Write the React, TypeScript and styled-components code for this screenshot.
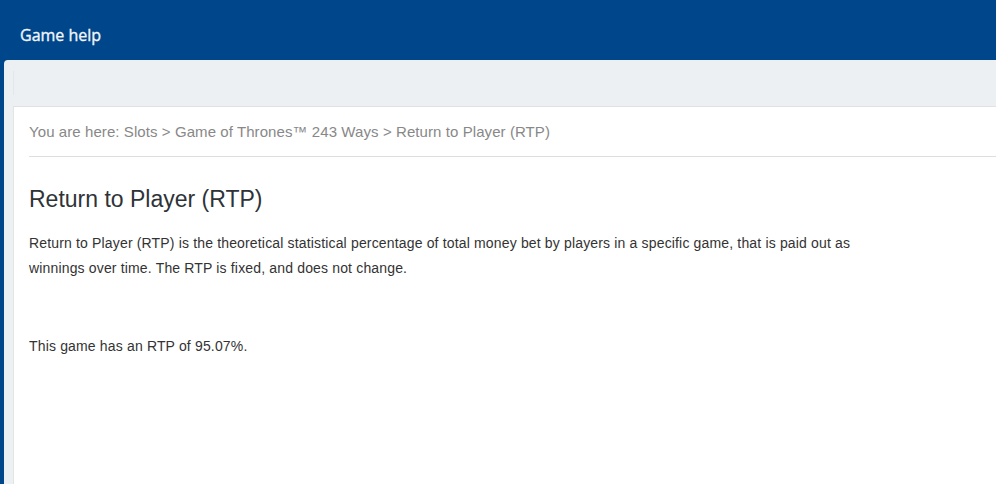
import * as React from 'react'
import styled, { createGlobalStyle } from 'styled-components'

const GlobalStyle = createGlobalStyle`
	html, body {
		margin: 0;
		padding: 0;
		background: #00468b;
		height: 100%;
	}
	#root {
		min-height: 100%;
	}
`

const Page = styled.div`
	display: flex;
	flex-direction: column;
	min-height: 484px;
	background: #00468b;
`

const Header = styled.header`
	height: 60px;
	display: flex;
	align-items: center;
	padding: 10px 0 0 20px;
	box-sizing: border-box;
	color: #f2f6fb;
	font-family: 'Open Sans', 'DejaVu Sans', sans-serif;
	font-size: 16px;
	font-weight: 400;
	-webkit-text-stroke: 0.35px #f2f6fb;
`

const Panel = styled.div`
	flex: 1;
	display: flex;
	flex-direction: column;
	margin-left: 4px;
	padding-left: 9px;
	background: #edf0f3;
	border-radius: 4px 0 0 0;
`

const Toolbar = styled.div`
	height: 46px;
	display: flex;
	align-items: center;
`

const ToolbarDivider = styled.span`
	width: 1px;
	height: 24px;
	background: #e3e6ea;
`

const Content = styled.main`
	flex: 1;
	background: #ffffff;
	border-left: 1px solid #e2e4e7;
	border-top: 1px solid #dfe1e4;
	padding-left: 15px;
	font-family: 'Liberation Sans', Arial, sans-serif;
`

const Breadcrumb = styled.nav`
	height: 49px;
	display: flex;
	align-items: center;
	border-bottom: 1px solid #dedede;
	color: #888888;
	font-size: 15px;
	letter-spacing: 0.08px;
`

const Title = styled.h1`
	margin: 29px 0 19px;
	font-size: 23px;
	font-weight: 400;
	line-height: 26px;
	color: #2e3338;
`

const Text = styled.p<{ $gap?: number }>`
	max-width: 850px;
	margin: ${(p) => p.$gap ?? 0}px 0 0;
	font-size: 14px;
	line-height: 25px;
	letter-spacing: 0.16px;
	color: #333333;
`

const App = () => {
	const rtp = '95.07%'

	return (
		<>
			<GlobalStyle />
			<Page>
				<Header>Game help</Header>
				<Panel>
					<Toolbar>
						<ToolbarDivider />
					</Toolbar>
					<Content>
						<Breadcrumb>
							You are here: Slots &gt; Game of Thrones™ 243 Ways &gt; Return to Player (RTP)
						</Breadcrumb>
						<Title>Return to Player (RTP)</Title>
						<Text>
							Return to Player (RTP) is the theoretical statistical percentage of total money bet by
							players in a specific game, that is paid out as winnings over time. The RTP is fixed, and
							does not change.
						</Text>
						<Text $gap={53}>This game has an RTP of {rtp}.</Text>
					</Content>
				</Panel>
			</Page>
		</>
	)
}

export default App
